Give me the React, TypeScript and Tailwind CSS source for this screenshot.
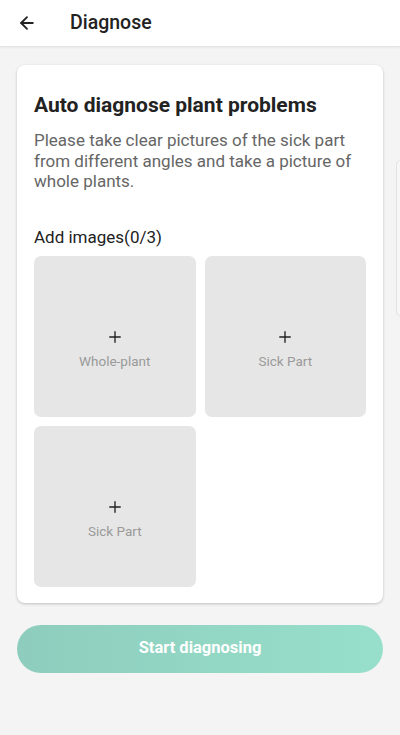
import { ArrowLeft, Plus } from "lucide-react";

const slots = ["Whole-plant", "Sick Part", "Sick Part"];

export default function App() {
  return (
    <div
      className="relative w-[400px] h-[735px] overflow-hidden bg-[#f4f4f4]"
      style={{ fontFamily: "Roboto, 'Noto Sans', sans-serif" }}
    >
      {/* header */}
      <div className="h-[47px] bg-white flex items-center border-b border-[#e4e4e4] shadow-[0_1px_2px_rgba(0,0,0,0.05)]">
        <ArrowLeft className="ml-[17px] w-[20px] h-[20px] text-[#222]" strokeWidth={2.2} />
        <span className="ml-[33px] text-[19.5px] font-medium text-[#222]">Diagnose</span>
      </div>

      {/* peek of next card */}
      <div className="absolute left-[396px] top-[159px] w-[20px] h-[158px] rounded-[6px] border border-[#e2e2e2] bg-[#f7f7f7]" />

      <div className="px-[17px] pt-[18px]">
        <div className="bg-white rounded-[8px] shadow-[0_1px_3px_rgba(0,0,0,0.22)] px-[17px] pt-[27px] pb-[16px]">
          <h1 className="text-[21px] font-bold text-[#222] leading-[26px]">Auto diagnose plant problems</h1>
          <p className="mt-[12px] text-[17px] leading-[20.5px] text-[#666]">
            Please take clear pictures of the sick part from different angles and take a picture of whole plants.
          </p>
          <div className="mt-[35px] text-[17px] text-[#222] leading-[20px]">Add images(0/3)</div>
          <div className="mt-[9px] grid grid-cols-2 gap-[9px]">
            {slots.map((s, i) => (
              <div key={i} className="h-[161px] rounded-[7px] bg-[#e6e6e6] flex flex-col items-center pt-[72px]">
                <Plus className="w-[18px] h-[18px] text-[#222]" strokeWidth={1.8} />
                <span className="mt-[7px] text-[13.5px] leading-[16px] text-[#9a9a9a]">{s}</span>
              </div>
            ))}
          </div>
        </div>

        <button className="mt-[22px] w-full h-[48px] rounded-full bg-gradient-to-r from-[#8ecdbd] to-[#97dfcb] text-white text-[16.5px] font-bold">
          Start diagnosing
        </button>
      </div>
    </div>
  );
}
